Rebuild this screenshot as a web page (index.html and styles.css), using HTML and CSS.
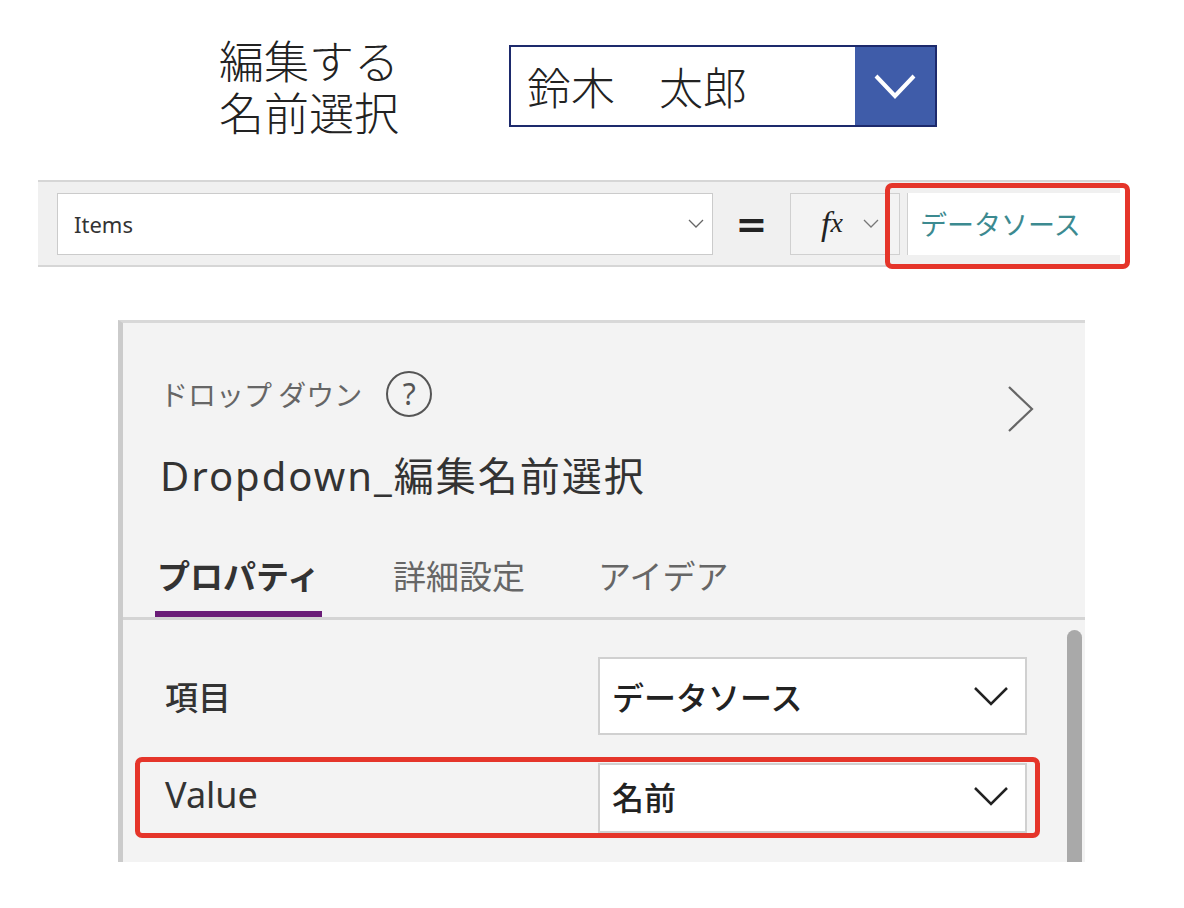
FILE: index.html
```html
<!DOCTYPE html>
<html lang="ja">
  <head>
    <meta charset="utf-8">
    <title>Dropdown Items</title>
    <link rel="stylesheet" href="styles.css">
  </head>
  <body>
    <div class="preview">
      <div class="previewLabel">
        <div class="labelLine">編集する</div>
        <div class="labelLine">名前選択</div>
      </div>
      <div class="nameSelect">
        <span class="nameValue">鈴木　太郎</span>
        <span class="nameButton">
          <svg width="44" height="28" viewBox="0 0 44 28"><polyline points="3,4 22,24 41,4" fill="none" stroke="#fff" stroke-width="4"/></svg>
        </span>
      </div>
    </div>

    <div class="formulaBar">
      <div class="propSelect">
        <span class="propName">Items</span>
        <svg width="16" height="10" viewBox="0 0 16 10"><polyline points="1,1 8,8 15,1" fill="none" stroke="#666" stroke-width="1.3"/></svg>
      </div>
      <div class="equals">=</div>
      <div class="fxBox">
        <span class="fx">f<span class="fxX">x</span></span>
        <svg width="16" height="10" viewBox="0 0 16 10"><polyline points="1,1 8,8 15,1" fill="none" stroke="#777" stroke-width="1.3"/></svg>
      </div>
      <div class="formulaInput">データソース</div>
      <div class="highlight formulaHighlight"></div>
    </div>

    <div class="panel">
      <div class="panelHeader">
        <span class="controlType">ドロップ ダウン</span>
        <span class="helpIcon">?</span>
        <svg class="expandIcon" width="28" height="48" viewBox="0 0 28 48"><polyline points="2,2 25,24 2,46" fill="none" stroke="#666" stroke-width="2.2"/></svg>
      </div>
      <div class="controlName">Dropdown_編集名前選択</div>
      <div class="tabs">
        <span class="tab active">プロパティ</span>
        <span class="tab">詳細設定</span>
        <span class="tab">アイデア</span>
      </div>
      <div class="propArea">
        <div class="propList">
          <div class="propRow">
            <span class="propLabel">項目</span>
            <div class="valueSelect">
              <span>データソース</span>
              <svg width="36" height="20" viewBox="0 0 36 20"><polyline points="2,2 18,18 34,2" fill="none" stroke="#222" stroke-width="2.5"/></svg>
            </div>
          </div>
          <div class="propRow">
            <span class="propLabel latin">Value</span>
            <div class="valueSelect short">
              <span>名前</span>
              <svg width="36" height="20" viewBox="0 0 36 20"><polyline points="2,2 18,18 34,2" fill="none" stroke="#222" stroke-width="2.5"/></svg>
            </div>
          </div>
        </div>
        <div class="scrollbar"></div>
      </div>
      <div class="highlight valueHighlight"></div>
    </div>
  </body>
</html>
```

FILE: styles.css
```css
body {
  margin: 0;
  background-color: white;
  color: #333;
  font-family: "Noto Sans", "Noto Sans CJK JP", sans-serif;
}
svg {
  display: block;
}
.preview {
  display: flex;
  align-items: center;
  height: 104px;
  padding: 34px 0 0 219px;
}
.previewLabel {
  width: 182px;
  font-family: "Noto Sans CJK JP", sans-serif;
  font-size: 45px;
  font-weight: 300;
  color: #222;
}
.labelLine {
  height: 52px;
  line-height: 52px;
}
.nameSelect {
  display: flex;
  margin-left: 108px;
  width: 428px;
  height: 82px;
  box-sizing: border-box;
  border: 2px solid #1d2a6c;
  background-color: white;
}
.nameValue {
  flex: 1;
  padding-left: 16px;
  font-family: "Noto Sans CJK JP", sans-serif;
  font-size: 44px;
  font-weight: 300;
  line-height: 78px;
  color: #222;
}
.nameButton {
  display: flex;
  align-items: center;
  justify-content: center;
  width: 80px;
  background-color: #3f5ca9;
}
.formulaBar {
  position: relative;
  display: flex;
  align-items: center;
  margin: 42px 0 0 38px;
  width: 1082px;
  height: 87px;
  box-sizing: border-box;
  padding-left: 19px;
  border-top: 2px solid #d6d6d6;
  border-bottom: 2px solid #d6d6d6;
  background-color: #f0f0f0;
}
.propSelect {
  display: flex;
  align-items: center;
  width: 656px;
  height: 62px;
  box-sizing: border-box;
  padding: 0 8px 0 16px;
  border: 1px solid #cbcbcb;
  background-color: white;
}
.propName {
  flex: 1;
  font-size: 22px;
  color: #333;
}
.equals {
  width: 77px;
  text-align: center;
  font-family: "DejaVu Sans", sans-serif;
  font-size: 38px;
  font-weight: bold;
  color: #222;
}
.fxBox {
  display: flex;
  align-items: center;
  width: 110px;
  height: 62px;
  box-sizing: border-box;
  padding-left: 30px;
  border: 1px solid #d0d0d0;
  background-color: #f3f3f3;
}
.fx {
  width: 42px;
  font-family: "Liberation Serif", serif;
  font-style: italic;
  font-size: 34px;
  line-height: 40px;
  color: #222;
}
.fxX {
  font-size: 28px;
  vertical-align: 3px;
}
.formulaInput {
  flex: 1;
  height: 62px;
  margin-left: 7px;
  padding-left: 12px;
  border-left: 1px solid #d0d0d0;
  background-color: white;
  font-family: "Noto Sans CJK JP", sans-serif;
  font-size: 27px;
  line-height: 62px;
  color: #3c8a90;
}
.highlight {
  position: absolute;
  box-sizing: border-box;
  border: 5px solid #e5352a;
  border-radius: 7px;
}
.formulaHighlight {
  left: 847px;
  top: 1px;
  width: 245px;
  height: 86px;
}
.panel {
  position: relative;
  display: flex;
  flex-direction: column;
  margin: 53px 0 0 118px;
  width: 967px;
  height: 542px;
  box-sizing: border-box;
  border-left: 5px solid #cbcbcb;
  border-top: 3px solid #d8d8d8;
  background-color: #f3f3f3;
  font-family: "Noto Sans", "Noto Sans CJK JP", sans-serif;
}
.panelHeader {
  display: flex;
  align-items: flex-start;
  height: 46px;
  margin-top: 48px;
  padding: 0 50px 0 37px;
}
.controlType {
  font-family: "Noto Sans CJK JP", sans-serif;
  font-size: 28px;
  line-height: 46px;
  color: #666;
}
.helpIcon {
  width: 42px;
  height: 42px;
  margin-left: 24px;
  border: 2px solid #555;
  border-radius: 50%;
  text-align: center;
  font-size: 30px;
  line-height: 42px;
  color: #555;
}
.expandIcon {
  margin: 14px 0 0 auto;
}
.controlName {
  margin: 34px 0 0 37px;
  font-size: 40px;
  letter-spacing: 2px;
  line-height: 50px;
  color: #333;
}
.tabs {
  display: flex;
  gap: 69px;
  margin-top: 52px;
  padding-left: 32px;
  border-bottom: 3px solid #d4d4d4;
}
.tab {
  padding: 0 2px 14px 2px;
  border-bottom: 6px solid transparent;
  font-family: "Noto Sans CJK JP", sans-serif;
  font-size: 33px;
  line-height: 44px;
  color: #666;
}
.tab.active {
  border-bottom-color: #6a1c77;
  font-weight: bold;
  color: #333;
}
.propArea {
  display: flex;
  flex: 1;
}
.propList {
  flex: 1;
  padding: 37px 0 0 42px;
}
.propRow {
  display: flex;
  align-items: center;
  margin-bottom: 28px;
}
.propLabel {
  width: 433px;
  font-family: "Noto Sans CJK JP", sans-serif;
  font-size: 33px;
  font-weight: 500;
  color: #333;
}
.propLabel.latin {
  padding-bottom: 8px;
  font-family: "Noto Sans", sans-serif;
  font-weight: normal;
  font-size: 36px;
}
.valueSelect {
  display: flex;
  align-items: center;
  justify-content: space-between;
  width: 429px;
  height: 78px;
  box-sizing: border-box;
  padding: 0 16px 0 12px;
  border: 2px solid #d0d0d0;
  background-color: white;
  font-family: "Noto Sans CJK JP", sans-serif;
  font-size: 32px;
  font-weight: 500;
  color: #222;
}
.valueSelect.short {
  height: 70px;
  padding-bottom: 4px;
}
.scrollbar {
  width: 15px;
  margin: 10px 3px 0 40px;
  border-radius: 8px 8px 0 0;
  background-color: #a9a9a9;
}
.valueHighlight {
  left: 12px;
  top: 434px;
  width: 905px;
  height: 81px;
}
```
